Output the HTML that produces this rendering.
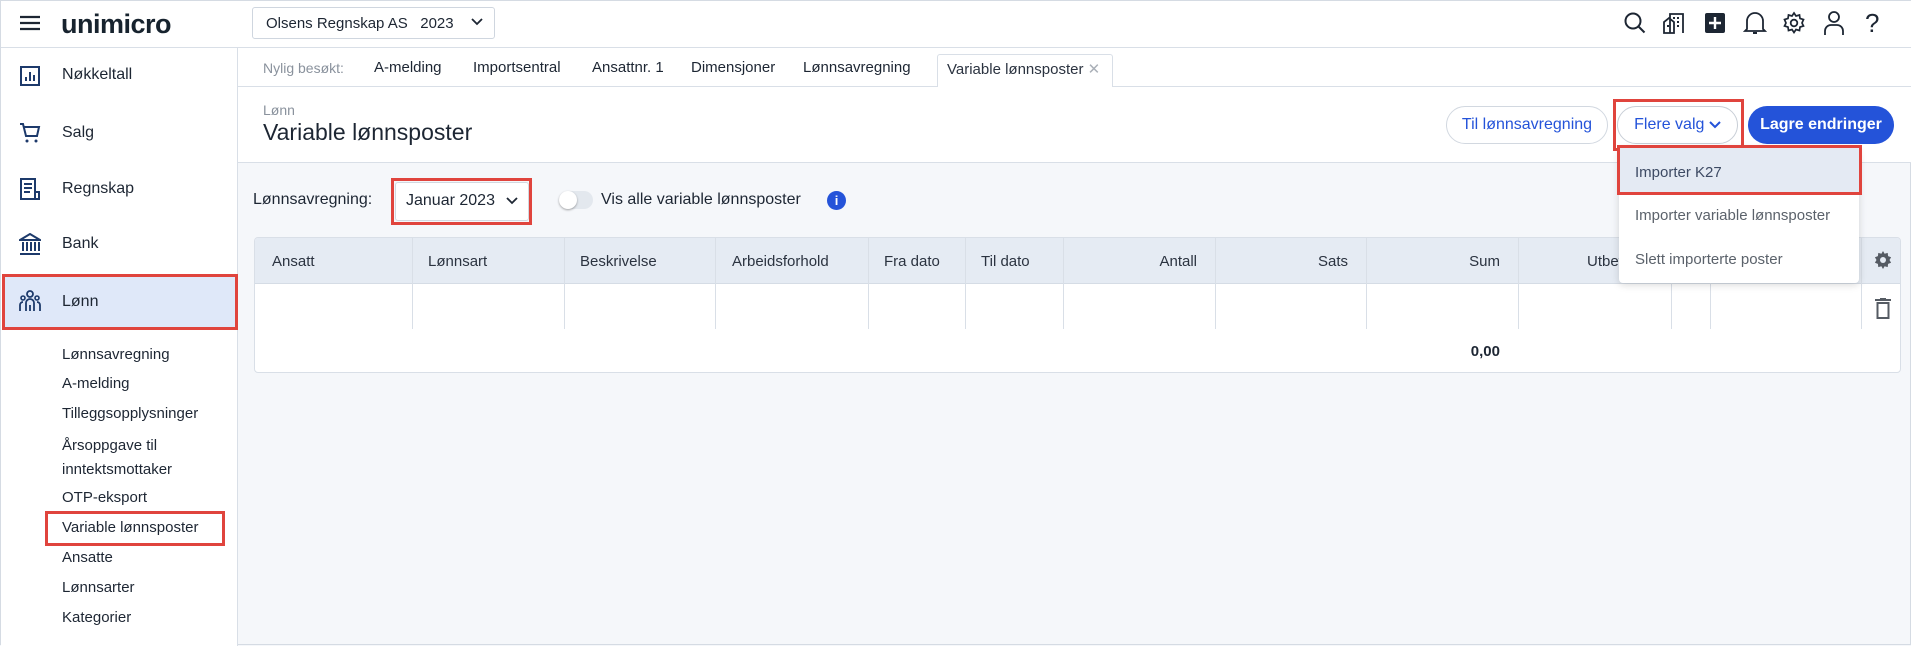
<!DOCTYPE html>
<html><head><meta charset="utf-8"><style>
*{box-sizing:border-box;margin:0;padding:0}
body{width:1911px;height:645px;overflow:hidden;font-family:"Liberation Sans",sans-serif;color:#1d2633;background:#f5f7fa;position:relative;border:1px solid #d5dbe3}
.a{position:absolute}
.top{left:0;top:0;width:1911px;height:47px;background:#fff;border-bottom:1px solid #d9dfe7}
.side{left:0;top:47px;width:237px;height:598px;background:#fff;border-right:1px solid #d9dfe7}
.red{position:absolute;border:3px solid #e0443d}
.t{position:absolute;white-space:nowrap}
.ic{position:absolute}
.hd{color:#2b3340;font-size:15px}
.col{position:absolute;top:0;height:91px;border-left:1px solid #d9dfe7}
.btn{position:absolute;border-radius:20px;font-size:16px;display:flex;align-items:center;justify-content:center}
</style></head><body>
<div class="a top"></div>
<svg class="ic" style="left:19px;top:14px" width="20" height="16"><path d="M0 2h20M0 8h20M0 14h20" stroke="#1d2633" stroke-width="2.2"/></svg>
<div class="t" style="left:60px;top:8px;font-size:27px;font-weight:bold;color:#17232e;letter-spacing:-0.5px">unimicro</div>
<div class="a" style="left:251px;top:6px;width:243px;height:32px;border:1px solid #cfd6df;border-radius:3px;background:#fff"></div>
<div class="t" style="left:265px;top:14px;font-size:15px">Olsens Regnskap AS&nbsp;&nbsp; 2023</div>
<svg class="ic" style="left:470px;top:17px" width="12" height="8"><path d="M1 1l5 5 5-5" stroke="#1d2633" stroke-width="1.8" fill="none"/></svg>
<svg class="ic" style="left:1622px;top:10px" width="24" height="24"><circle cx="10" cy="10" r="7.5" stroke="#1d2633" stroke-width="2" fill="none"/><path d="M15.5 15.5l6 6" stroke="#1d2633" stroke-width="2"/></svg>
<svg class="ic" style="left:1661px;top:10px" width="24" height="24"><path d="M2 22V11l5-4 5 4v11zM8 22V3h13v19" stroke="#1d2633" stroke-width="1.8" fill="none"/><path d="M11 7h2M15 7h2M15 11h2M15 15h2M5 15h2" stroke="#1d2633" stroke-width="2"/></svg>
<svg class="ic" style="left:1703px;top:11px" width="22" height="22"><rect x="1" y="1" width="20" height="20" rx="2" fill="#1d2633"/><path d="M11 5v12M5 11h12" stroke="#fff" stroke-width="2.4"/></svg>
<svg class="ic" style="left:1742px;top:9px" width="24" height="26"><path d="M4 19V11a8 8 0 0116 0v8l2 2H2z" stroke="#1d2633" stroke-width="1.8" fill="none"/><path d="M10 23h4" stroke="#1d2633" stroke-width="2"/></svg>
<svg class="ic" style="left:1781px;top:10px" width="24" height="24"><path d="M12 2l2 3 3.5-1 .5 3.5 3.5 1-1.5 3.5 1.5 3-3.5 1-.5 3.5-3.5-1-2 3-2-3-3.5 1-.5-3.5-3.5-1 1.5-3-1.5-3.5 3.5-1 .5-3.5 3.5 1z" stroke="#1d2633" stroke-width="1.7" fill="none"/><circle cx="12" cy="12" r="3.3" stroke="#1d2633" stroke-width="1.8" fill="none"/></svg>
<svg class="ic" style="left:1821px;top:9px" width="24" height="26"><circle cx="12" cy="7" r="5" stroke="#1d2633" stroke-width="1.8" fill="none"/><path d="M3 25v-4a6 6 0 016-6h6a6 6 0 016 6v4" stroke="#1d2633" stroke-width="1.8" fill="none"/></svg>
<div class="t" style="left:1864px;top:7px;font-size:26px;color:#1d2633">?</div>

<div class="a side"></div>
<svg class="ic" style="left:19px;top:65px" width="20" height="20"><rect x="1" y="1" width="18" height="18" stroke="#1d3a6b" stroke-width="2" fill="none"/><path d="M6 15v-4M10 15V6M14 15v-6" stroke="#1d3a6b" stroke-width="2"/></svg>
<div class="t" style="left:61px;top:65px;font-size:16px">Nøkkeltall</div>
<svg class="ic" style="left:18px;top:121px" width="22" height="22"><path d="M1 2h3l3 12h11l2-9H5" stroke="#1d3a6b" stroke-width="2" fill="none"/><circle cx="8" cy="19" r="1.5" fill="#1d3a6b"/><circle cx="17" cy="19" r="1.5" fill="#1d3a6b"/></svg>
<div class="t" style="left:61px;top:123px;font-size:16px">Salg</div>
<svg class="ic" style="left:19px;top:177px" width="20" height="22"><path d="M1 1h14v20H1zM15 14h4v7h-4" stroke="#1d3a6b" stroke-width="2" fill="none"/><path d="M4 6h8M4 10h8M4 14h6" stroke="#1d3a6b" stroke-width="2"/></svg>
<div class="t" style="left:61px;top:179px;font-size:16px">Regnskap</div>
<svg class="ic" style="left:18px;top:232px" width="22" height="22"><path d="M1 7l10-6 10 6zM1 21h20M4 9v9M8 9v9M12 9v9M16 9v9M20 9v9" stroke="#1d3a6b" stroke-width="2" fill="none"/></svg>
<div class="t" style="left:61px;top:234px;font-size:16px">Bank</div>
<div class="a" style="left:1px;top:275px;width:235px;height:52px;background:#dfe8f9"></div>
<div class="red" style="left:1px;top:273px;width:236px;height:56px"></div>
<svg class="ic" style="left:18px;top:289px" width="22" height="22"><circle cx="11" cy="4" r="3" stroke="#1d3a6b" stroke-width="1.8" fill="none"/><circle cx="4" cy="8" r="2" stroke="#1d3a6b" stroke-width="1.6" fill="none"/><circle cx="18" cy="8" r="2" stroke="#1d3a6b" stroke-width="1.6" fill="none"/><path d="M7 21v-8a4 4 0 018 0v8M1 21v-6a3 3 0 013-3M21 21v-6a3 3 0 00-3-3M11 15v6" stroke="#1d3a6b" stroke-width="1.8" fill="none"/></svg>
<div class="t" style="left:61px;top:292px;font-size:16px">Lønn</div>
<div class="t" style="left:61px;top:345px;font-size:15px">Lønnsavregning</div>
<div class="t" style="left:61px;top:374px;font-size:15px">A-melding</div>
<div class="t" style="left:61px;top:404px;font-size:15px">Tilleggsopplysninger</div>
<div class="t" style="left:61px;top:433px;font-size:15px;line-height:24px">Årsoppgave til<br>inntektsmottaker</div>
<div class="t" style="left:61px;top:488px;font-size:15px">OTP-eksport</div>
<div class="red" style="left:44px;top:510px;width:180px;height:35px"></div>
<div class="t" style="left:61px;top:518px;font-size:15px">Variable lønnsposter</div>
<div class="t" style="left:61px;top:548px;font-size:15px">Ansatte</div>
<div class="t" style="left:61px;top:578px;font-size:15px">Lønnsarter</div>
<div class="t" style="left:61px;top:608px;font-size:15px">Kategorier</div>

<div class="a" style="left:237px;top:47px;width:1674px;height:115px;background:#fff;border-bottom:1px solid #d9dfe7"></div>
<div class="a" style="left:237px;top:85px;width:1674px;height:1px;background:#d9dfe7"></div>
<div class="t" style="left:262px;top:59px;font-size:14px;color:#8a929d">Nylig besøkt:</div>
<div class="t" style="left:373px;top:58px;font-size:15px">A-melding</div>
<div class="t" style="left:472px;top:58px;font-size:15px">Importsentral</div>
<div class="t" style="left:591px;top:58px;font-size:15px">Ansattnr. 1</div>
<div class="t" style="left:690px;top:58px;font-size:15px">Dimensjoner</div>
<div class="t" style="left:802px;top:58px;font-size:15px">Lønnsavregning</div>
<div class="a" style="left:936px;top:53px;width:176px;height:33px;background:#fff;border:1px solid #d9dfe7;border-bottom:none;border-radius:3px 3px 0 0"></div>
<div class="t" style="left:946px;top:59px;font-size:15px;color:#2b3340">Variable lønnsposter <span style="color:#aab0b8">✕</span></div>
<div class="t" style="left:262px;top:101px;font-size:14px;color:#8a929d">Lønn</div>
<div class="t" style="left:262px;top:118px;font-size:23px">Variable lønnsposter</div>

<div class="btn" style="left:1445px;top:105px;width:162px;height:38px;border:1px solid #d2d8e0;background:#fff;color:#2453d9">Til lønnsavregning</div>
<div class="btn" style="left:1616px;top:105px;width:121px;height:38px;border:1px solid #c8ced6;background:#fff;color:#2453d9">Flere valg&nbsp;<svg width="12" height="8"><path d="M1 1l5 5 5-5" stroke="#2453d9" stroke-width="2" fill="none"/></svg></div>
<div class="red" style="left:1612px;top:98px;width:131px;height:52px"></div>
<div class="btn" style="left:1747px;top:105px;width:146px;height:38px;background:#2453d9;color:#fff;font-weight:bold">Lagre endringer</div>

<div class="t" style="left:252px;top:190px;font-size:16px">Lønnsavregning:</div>
<div class="a" style="left:394px;top:181px;width:134px;height:39px;background:#fff;border:1px solid #d2d8e0;border-radius:3px"></div>
<div class="red" style="left:390px;top:177px;width:141px;height:47px"></div>
<div class="t" style="left:405px;top:191px;font-size:16px">Januar 2023</div>
<svg class="ic" style="left:505px;top:196px" width="12" height="8"><path d="M1 1l5 5 5-5" stroke="#1d2633" stroke-width="1.8" fill="none"/></svg>
<div class="a" style="left:558px;top:190px;width:34px;height:18px;border-radius:9px;background:#e3e8ee"></div>
<div class="a" style="left:558px;top:190px;width:18px;height:18px;border-radius:9px;background:#fff;box-shadow:0 1px 2px rgba(0,0,0,.35)"></div>
<div class="t" style="left:600px;top:190px;font-size:16px">Vis alle variable lønnsposter</div>
<div class="a" style="left:826px;top:190px;width:19px;height:19px;border-radius:50%;background:#2453d9;color:#fff;font-weight:bold;font-size:13px;text-align:center;line-height:19px">i</div>

<div class="a" style="left:253px;top:236px;width:1647px;height:136px;background:#fff;border:1px solid #d9dfe7;border-radius:4px;overflow:hidden">
  <div class="a" style="left:0;top:0;width:1647px;height:46px;background:#e5ebf3;border-bottom:1px solid #d5dce5"></div>
  <div class="col" style="left:157px"></div><div class="col" style="left:309px"></div><div class="col" style="left:460px"></div><div class="col" style="left:613px"></div><div class="col" style="left:710px"></div><div class="col" style="left:808px"></div><div class="col" style="left:960px"></div><div class="col" style="left:1111px"></div><div class="col" style="left:1263px"></div><div class="col" style="left:1416px"></div><div class="col" style="left:1455px"></div><div class="col" style="left:1606px"></div>
  <div class="t hd" style="left:17px;top:15px">Ansatt</div>
  <div class="t hd" style="left:173px;top:15px">Lønnsart</div>
  <div class="t hd" style="left:325px;top:15px">Beskrivelse</div>
  <div class="t hd" style="left:477px;top:15px">Arbeidsforhold</div>
  <div class="t hd" style="left:629px;top:15px">Fra dato</div>
  <div class="t hd" style="left:726px;top:15px">Til dato</div>
  <div class="t hd" style="right:703px;top:15px">Antall</div>
  <div class="t hd" style="right:552px;top:15px">Sats</div>
  <div class="t hd" style="right:400px;top:15px">Sum</div>
  <div class="t hd" style="left:1332px;top:15px">Utbetales</div>
  <div class="t" style="right:400px;top:105px;font-size:15px;font-weight:bold">0,00</div>
  <svg class="ic" style="left:1619px;top:13px" width="18" height="18"><path d="M9 0l1.6 2.8 3.1-.9.4 3.2 3 1.2-1.6 2.7 1.6 2.7-3 1.2-.4 3.2-3.1-.9L9 18l-1.6-2.8-3.1.9-.4-3.2-3-1.2L2.5 9 .9 6.3l3-1.2.4-3.2 3.1.9z" fill="#555b63"/><circle cx="9" cy="9" r="3" fill="#e5ebf3"/></svg>
  <svg class="ic" style="left:1620px;top:60px" width="16" height="22"><path d="M0 2h16M5 0h6" stroke="#555b63" stroke-width="2"/><rect x="2.5" y="5" width="11" height="15" stroke="#555b63" stroke-width="2" fill="none"/></svg>
</div>

<div class="a" style="left:1618px;top:146px;width:240px;height:136px;background:#fff;border-radius:4px;box-shadow:0 2px 8px rgba(0,0,0,.15)"></div>
<div class="a" style="left:1618px;top:146px;width:240px;height:46px;background:#e4eaf3"></div>
<div class="red" style="left:1616px;top:144px;width:245px;height:50px"></div>
<div class="t" style="left:1634px;top:163px;font-size:15px;color:#3d4a63">Importer K27</div>
<div class="t" style="left:1634px;top:206px;font-size:15px;color:#5b626b">Importer variable lønnsposter</div>
<div class="t" style="left:1634px;top:250px;font-size:15px;color:#5b626b">Slett importerte poster</div>
</body></html>
